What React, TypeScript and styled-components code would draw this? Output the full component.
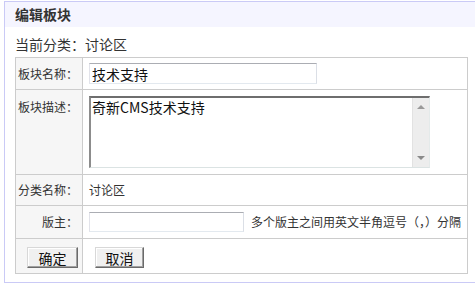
import React from "react";
import styled, { createGlobalStyle } from "styled-components";

const GlobalStyle = createGlobalStyle`
  html, body { margin: 0; padding: 0; background: #fff; }
  body {
    font-family: "Noto Sans CJK SC", "Liberation Sans", sans-serif;
    font-size: 12px;
    color: #333;
  }
`;

const Panel = styled.div`
  margin: 1px 0 0 4px;
  width: 480px;
  border: 1px solid #cacaf6;
  padding-bottom: 8px;
`;

const Header = styled.div`
  height: 25px;
  line-height: 25px;
  background: #f5f5ff;
  padding-left: 10px;
  font-size: 14px;
  font-weight: bold;
  color: #333;
`;

const Current = styled.div`
  padding: 9px 10px 5px;
  font-size: 14px;
  line-height: 16px;
  color: #333;
`;

const Table = styled.table`
  margin-left: 10px;
  border-collapse: collapse;
  width: 453px;
  td {
    border: 1px solid #cccccc;
  }
`;

const LabelCell = styled.td<{ $top?: boolean }>`
  box-sizing: border-box;
  width: 67px;
  padding: ${(p) => (p.$top ? "9px 4px 0 0" : "0 4px 0 0")};
  background: #f6f6f6;
  text-align: right;
  vertical-align: ${(p) => (p.$top ? "top" : "middle")};
  white-space: nowrap;
  line-height: 16px;
`;

const FieldCell = styled.td`
  padding: 5px 6px;
  vertical-align: middle;
  white-space: nowrap;
`;

const FieldRow = styled.div<{ $h: number }>`
  display: flex;
  align-items: center;
  min-height: ${(p) => p.$h}px;
  line-height: 20px;
`;

const TextInput = styled.input<{ $w: number; $h: number }>`
  box-sizing: border-box;
  width: ${(p) => p.$w}px;
  height: ${(p) => p.$h}px;
  margin: 0;
  padding: 0 2px;
  border: 1px solid;
  border-color: #abadb3 #dbdfe6 #e3e9ef #e2e3ea;
  font-family: "Noto Sans CJK SC", sans-serif;
  font-size: 14px;
  color: #111;
  outline: none;
  flex: none;
`;

const AreaFrame = styled.div`
  box-sizing: border-box;
  display: flex;
  width: 341px;
  height: 72px;
  border-top: 2px solid #6e6e6e;
  border-left: 2px solid #8c8c8c;
  border-right: 1px solid #e4eaea;
  border-bottom: 1px solid #dbe3e3;
`;

const Area = styled.textarea`
  flex: 1;
  border: none;
  resize: none;
  outline: none;
  padding: 0 1px;
  margin: 0;
  font-family: "Noto Sans CJK SC", sans-serif;
  font-size: 14px;
  line-height: 18px;
  color: #111;
  overflow: hidden;
`;

const ScrollBar = styled.div`
  width: 16px;
  background: #ededed;
  border-left: 1px solid #e2e2e2;
  display: flex;
  flex-direction: column;
  justify-content: space-between;
  align-items: center;
  padding: 7px 0 7px;
`;

const Arrow = styled.span<{ $down?: boolean }>`
  width: 0;
  height: 0;
  border-left: 4px solid transparent;
  border-right: 4px solid transparent;
  ${(p) =>
    p.$down
      ? "border-top: 4px solid #8a8a8a;"
      : "border-bottom: 4px solid #9a9a9a;"}
`;

const Hint = styled.span`
  margin-left: 7px;
  font-size: 12px;
`;

const Button = styled.button<{ $w: number; $ml?: number }>`
  box-sizing: border-box;
  width: ${(p) => p.$w}px;
  height: 21px;
  margin: 3px 0 0 ${(p) => p.$ml ?? 0}px;
  padding: 0;
  background: #f0f0f0;
  border: 1px solid;
  border-color: #d8d8d8 #6a6a6a #6a6a6a #d8d8d8;
  box-shadow: inset -1px -1px 0 #a0a0a0, inset 1px 1px 0 #fff;
  font-family: "Noto Sans CJK SC", sans-serif;
  font-size: 14px;
  line-height: 18px;
  color: #111;
  display: block;
`;

const BtnLabelCell = styled.td`
  padding: 5px 4px 5px 0;
  background: #f6f6f6;
  vertical-align: top;
  & > button { margin-left: auto; }
`;

const BtnCell = styled.td`
  padding: 5px 6px;
  vertical-align: top;
`;

export default function App() {
  return (
    <>
      <GlobalStyle />
      <Panel>
        <Header>编辑板块</Header>
        <Current>当前分类：讨论区</Current>
        <Table>
          <tbody>
            <tr>
              <LabelCell>板块名称：</LabelCell>
              <FieldCell>
                <FieldRow $h={21}>
                  <TextInput $w={228} $h={21} defaultValue="技术支持" />
                </FieldRow>
              </FieldCell>
            </tr>
            <tr>
              <LabelCell $top>板块描述：</LabelCell>
              <FieldCell>
                <FieldRow $h={74}>
                  <AreaFrame>
                    <Area defaultValue="奇新CMS技术支持" />
                    <ScrollBar>
                      <Arrow />
                      <Arrow $down />
                    </ScrollBar>
                  </AreaFrame>
                </FieldRow>
              </FieldCell>
            </tr>
            <tr>
              <LabelCell>分类名称：</LabelCell>
              <FieldCell>
                <FieldRow $h={20}>讨论区</FieldRow>
              </FieldCell>
            </tr>
            <tr>
              <LabelCell>版主：</LabelCell>
              <FieldCell>
                <FieldRow $h={22}>
                  <TextInput $w={155} $h={20} />
                  <Hint>多个版主之间用英文半角逗号（，）分隔</Hint>
                </FieldRow>
              </FieldCell>
            </tr>
            <tr>
              <BtnLabelCell>
                <Button $w={51}>确定</Button>
              </BtnLabelCell>
              <BtnCell>
                <Button $w={49} $ml={6}>取消</Button>
              </BtnCell>
            </tr>
          </tbody>
        </Table>
      </Panel>
    </>
  );
}
